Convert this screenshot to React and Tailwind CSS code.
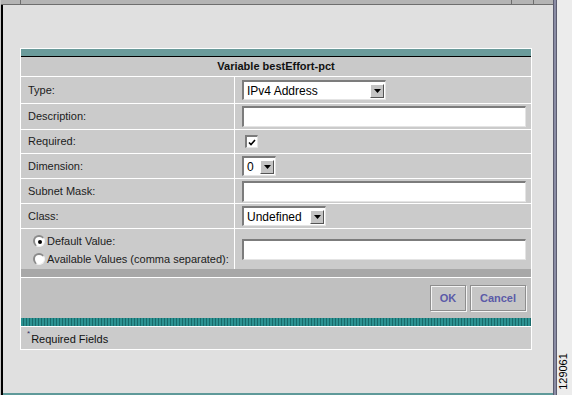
import React from "react";

function Sunken({ className = "", children }) {
  return (
    <div
      className={`bg-white border-t-2 border-l-2 border-t-[#7c7c7c] border-l-[#7c7c7c] border-b border-r border-b-[#e4e4e4] border-r-[#e4e4e4] ${className}`}
    >
      {children}
    </div>
  );
}

function Select({ width, text }) {
  return (
    <Sunken className={`${width} h-[20px] flex items-center justify-between pl-[3px] pr-[1px]`}>
      <span className="text-[12px] text-black leading-none">{text}</span>
      <div className="w-[14px] h-[14px] bg-[#c4c4c4] border border-t-white border-l-white border-b-[#555] border-r-[#555] flex items-center justify-center">
        <svg width="7" height="4" viewBox="0 0 7 4">
          <polygon points="0,0 7,0 3.5,4" fill="#000" />
        </svg>
      </div>
    </Sunken>
  );
}

function Row({ label, children, h }) {
  return (
    <div className={`flex ${h} border-b border-white bg-[#cbcbcb]`}>
      <div className="w-[214px] border-r border-white flex items-center pl-[7px] text-[#1c1c1c]">
        {label}
      </div>
      <div className="flex-1 flex items-center pl-[7px]">{children}</div>
    </div>
  );
}

function Radio({ checked }) {
  return (
    <div className="w-[12px] h-[12px] rounded-full bg-white border-t-2 border-l-2 border-t-[#8a8a8a] border-l-[#8a8a8a] border-b border-r border-b-[#f0f0f0] border-r-[#f0f0f0] flex items-center justify-center">
      {checked && <div className="w-[4px] h-[4px] rounded-full bg-black" />}
    </div>
  );
}

function Button({ children, w }) {
  return (
    <div
      className={`${w} h-[26px] bg-[#c6c6c6] border border-[#8e8e8e] shadow-[inset_1px_1px_0_#f4f4f4,1px_1px_0_#f4f4f4] flex items-center justify-center font-bold text-[#5b5ba8] text-[11px]`}
    >
      {children}
    </div>
  );
}

export default function App() {
  return (
    <div className="w-[572px] h-[395px] flex bg-[#d0d0d0] overflow-hidden font-['Liberation_Sans',Arial,sans-serif] text-[11px]">
      <div className="w-[1px] bg-[#c8c8c8]" />
      <div className="w-[552px] flex flex-col">
        <div className="h-[5px] bg-[#b4b4b4] border-b border-[#6e6e6e] flex">
          <div className="w-[20px] border-r border-[#6e6e6e]" />
          <div className="flex-1" />
          <div className="w-[22px] border-l border-[#6e6e6e]" />
          <div className="w-[20px] border-l border-[#6e6e6e]" />
        </div>
        <div className="flex-1 flex flex-col border-l-2 border-black bg-[#e0e0e0]">
          <div className="flex-1 pt-[43px] pl-[17px]">
            <div className="w-[512px] border-t border-l border-r border-white flex flex-col">
              <div className="h-[7px] bg-[#6b9b9b]" />
              <div className="h-[1px] bg-black" />
              <div className="h-[20px] bg-[#c9c9c9] border-b border-white flex items-center justify-center font-bold text-[#111]">
                Variable bestEffort-pct
              </div>
              <Row label="Type:" h="h-[27px]">
                <Select width="w-[144px]" text="IPv4 Address" />
              </Row>
              <Row label="Description:" h="h-[26px]">
                <Sunken className="w-[284px] h-[21px]" />
              </Row>
              <Row label="Required:" h="h-[24px]">
                <div className="ml-[3px] w-[13px] h-[13px] bg-white border-t-2 border-l-2 border-t-[#7c7c7c] border-l-[#7c7c7c] border-b border-r border-b-[#e4e4e4] border-r-[#e4e4e4] flex items-center justify-center">
                  <svg width="8" height="7" viewBox="0 0 8 7">
                    <polyline points="1,3.5 3,5.5 7,1" fill="none" stroke="#000" strokeWidth="1.6" />
                  </svg>
                </div>
              </Row>
              <Row label="Dimension:" h="h-[25px]">
                <Select width="w-[34px]" text="0" />
              </Row>
              <Row label="Subnet Mask:" h="h-[25px]">
                <Sunken className="w-[284px] h-[21px]" />
              </Row>
              <Row label="Class:" h="h-[25px]">
                <Select width="w-[84px]" text="Undefined" />
              </Row>
              <div className="flex h-[40px] bg-[#cbcbcb]">
                <div className="w-[214px] border-r border-white flex flex-col justify-center gap-[1px] pt-[2px] pl-[12px] text-[#1c1c1c]">
                  <div className="flex items-center gap-[2px]">
                    <Radio checked />
                    <span>Default Value:</span>
                  </div>
                  <div className="flex items-center gap-[2px]">
                    <Radio />
                    <span>Available Values (comma separated):</span>
                  </div>
                </div>
                <div className="flex-1 flex items-center pl-[7px]">
                  <Sunken className="w-[284px] h-[21px]" />
                </div>
              </div>
              <div className="h-[8px] bg-[#a8a8a8] border-b border-white box-content" />
              <div className="h-[40px] bg-[#c0c0c0] flex items-center justify-end gap-[4px] pr-[5px]">
                <Button w="w-[36px]">OK</Button>
                <Button w="w-[56px]">Cancel</Button>
              </div>
              <div className="h-[8px] bg-[repeating-linear-gradient(90deg,#2c9292_0px,#2c9292_2px,#176a6a_2px,#176a6a_3px)]" />
              <div className="h-[24px] bg-[#cbcbcb] border-t border-b border-white flex items-start pl-[6px] pt-[3px] text-[#111]">
                <span className="text-[8px] leading-none text-[#333366] mr-[1px]">*</span>
                <span className="mt-[1px]">Required Fields</span>
              </div>
            </div>
          </div>
          <div className="h-[2px] bg-[#5f9a9a]" />
        </div>
      </div>
      <div className="w-[4px] bg-[#8a8ca4] border-l border-r border-[#5c5c70]" />
      <div className="flex-1 bg-[#ececec] relative">
        <div className="absolute left-[-1px] top-[352px] w-[14px] h-[38px] flex items-center justify-center">
          <span className="-rotate-90 text-[11px] text-black whitespace-nowrap leading-none">129061</span>
        </div>
      </div>
    </div>
  );
}
